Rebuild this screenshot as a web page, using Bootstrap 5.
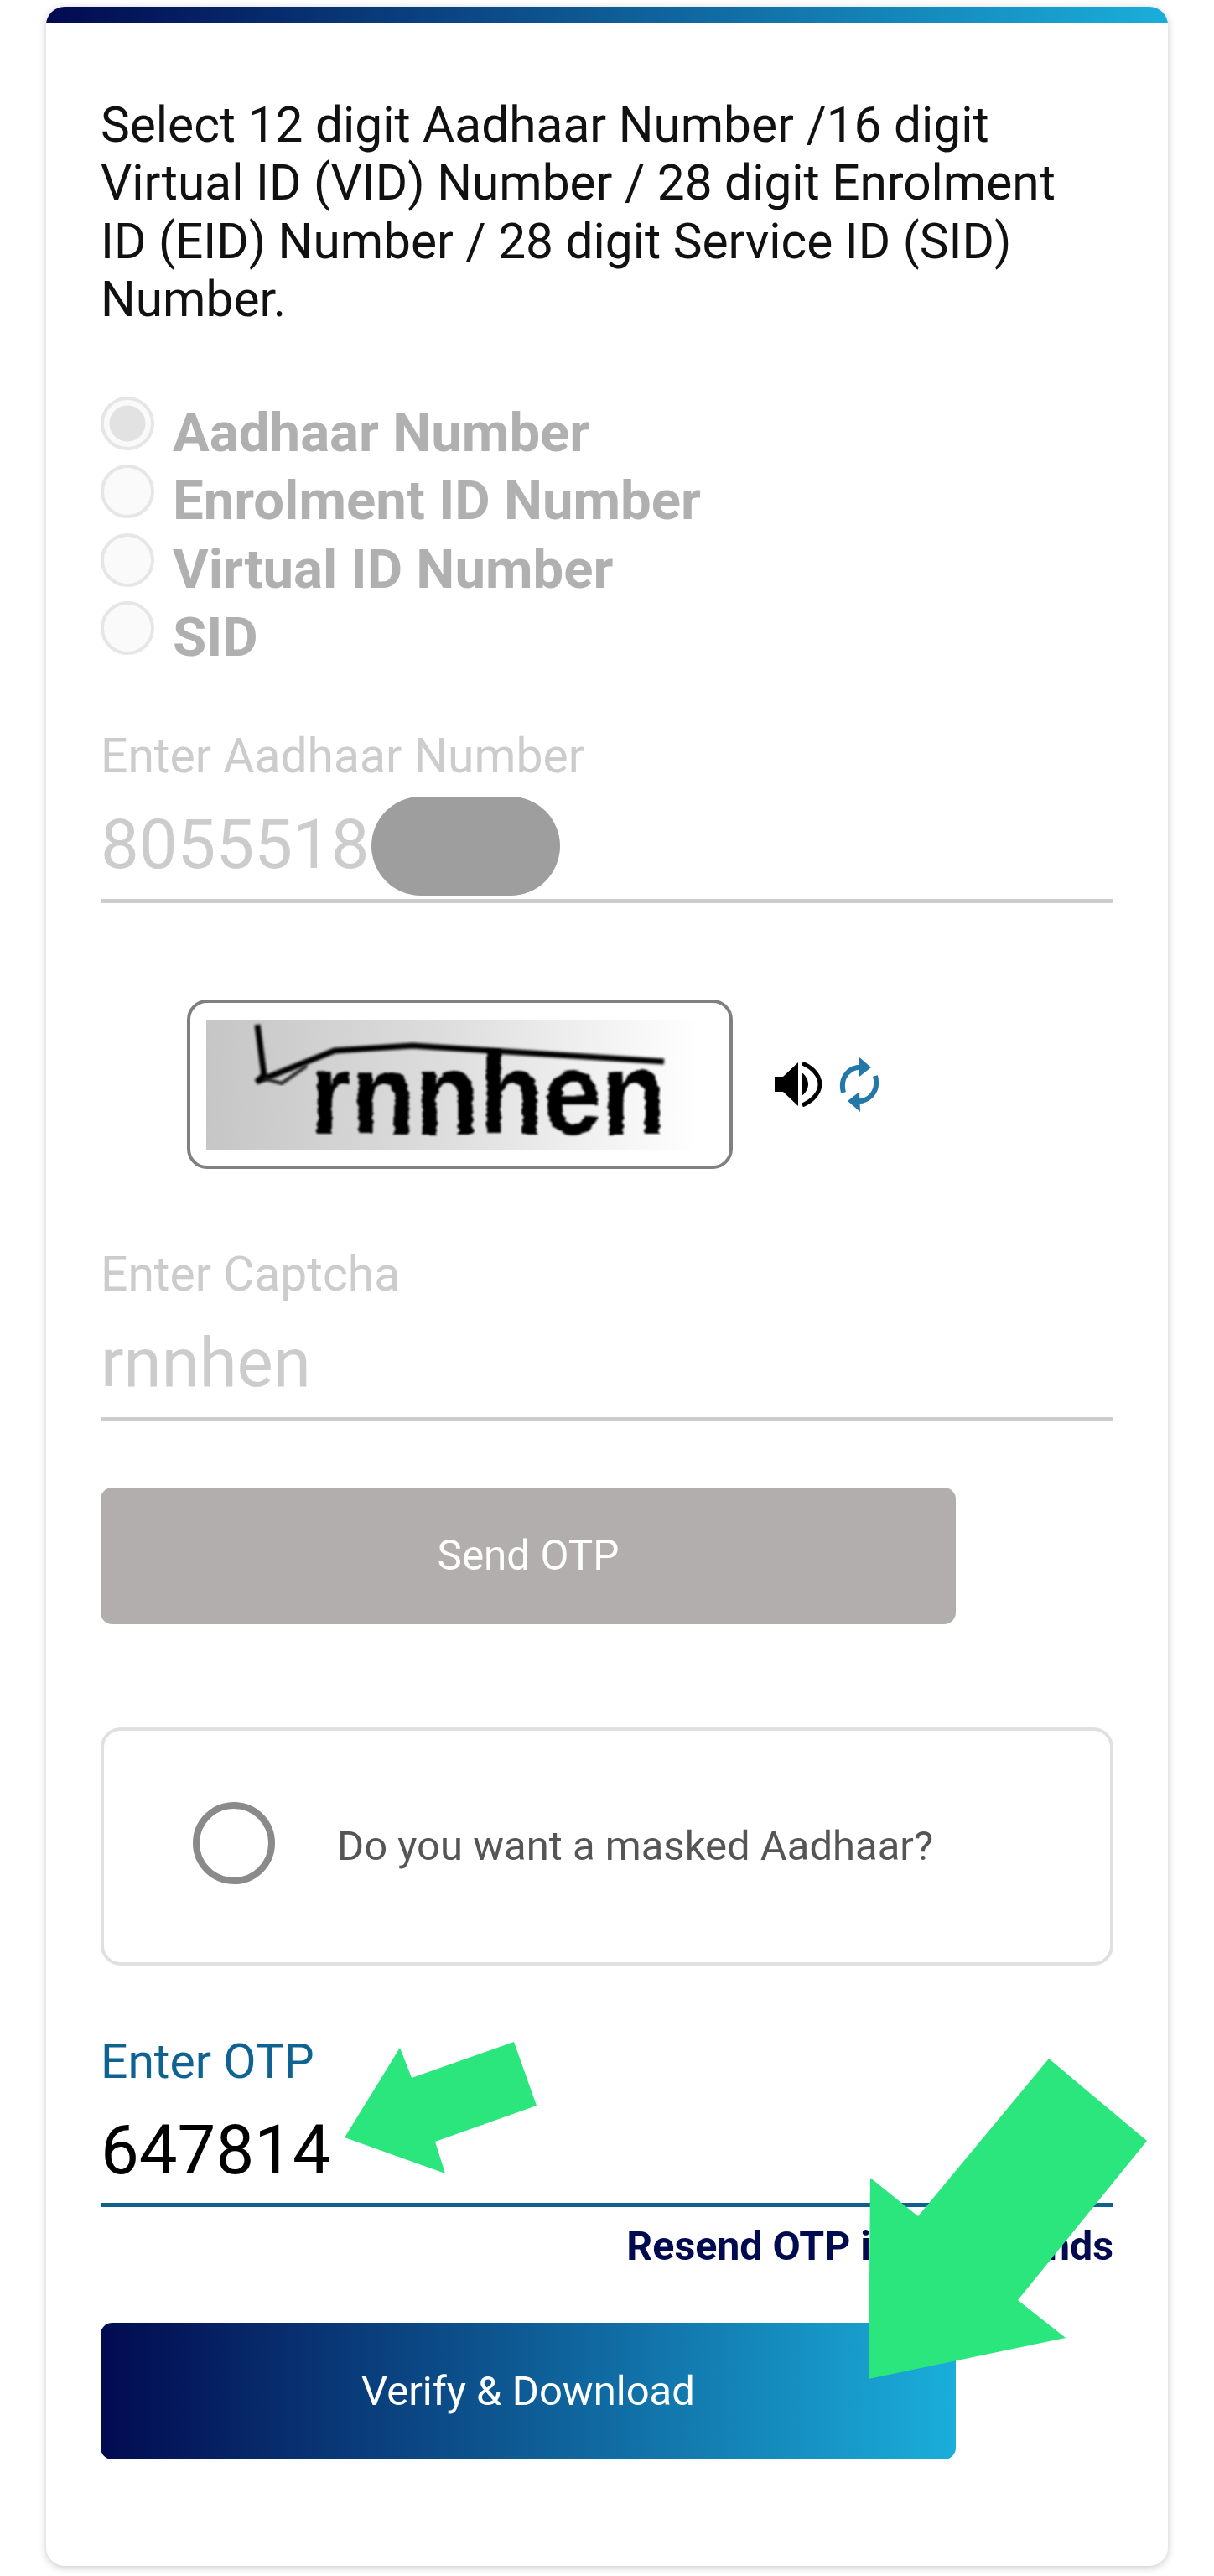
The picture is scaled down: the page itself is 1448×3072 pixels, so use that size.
<!DOCTYPE html>
<html lang="en">
<head>
<meta charset="utf-8">
<title>Download Aadhaar</title>
<link rel="stylesheet" href="https://cdn.jsdelivr.net/npm/bootstrap@5.3.0/dist/css/bootstrap.min.css">
<style>
html,body{margin:0;background:#fff;font-family:Roboto,"Liberation Sans",sans-serif}
.stage{position:relative;width:1448px;height:3072px;overflow:hidden;padding:8px 55px 0}
.sheet{width:1338px;height:3052px;border:0;border-radius:22px;box-shadow:0 2px 10px rgba(0,0,0,.22);background:#fff;overflow:hidden}
.topbar{height:20px;background:linear-gradient(90deg,#020a50,#1aaedb)}
.inner{padding:87px 65px 0}
.intro{font-size:58.6px;line-height:69.4px;color:#111;margin:0 0 80px;padding-right:50px}
.pick{height:81.6px;gap:22px}
.pick input{width:64px;height:64px;margin:0;flex:none;border:4px solid #cfcfcf;background:#f7f7f7;opacity:1}
.pick input:checked{background:radial-gradient(circle,#c6c6c6 0 21px,#f7f7f7 22px);border-color:#cfcfcf}
.pick span{font-size:65.3px;font-weight:700;line-height:64px;color:#b0b0b0;margin-top:11px;white-space:nowrap}
.fld-lab{font-size:57px;line-height:60px;color:#ccc}
.fld-val{height:140px;line-height:150px;font-size:81.5px;color:#ccc;border-bottom:5px solid #ccc;box-sizing:content-box}
.wrap-top{margin-top:73px}
.capt-row{margin:115px 0 0 103px;gap:50px}
.capt-box{width:651px;height:202px;border:4px solid #808080;border-radius:24px;padding:20px 19px}
.capt-img{display:block;width:605px;height:155px;overflow:visible;background:linear-gradient(90deg,#c6c6c6,#dcdcdc 45%,#fff 97%)}
.capt-gap{margin-top:96px}
.icon-set{gap:20px}
.fake-btn{display:block;width:1020px;height:163px;border:0;border-radius:14px;color:#fff;font-size:49.4px;line-height:163px;padding:0;text-align:center}
.fake-btn:disabled{background:#b3aeae;color:#fff;opacity:1;margin-top:79px}
.mask-box{margin-top:123px;height:284px;border:4px solid #e0e0e0;border-radius:24px;padding-left:106px;gap:74px}
.ring{width:98px;height:98px;border:8px solid #8a8a8a;border-radius:50%;flex:none;margin-bottom:8px}
.mask-txt{font-size:49px;color:#555}
.otp-lab{margin-top:85px;font-size:57px;line-height:60px;color:#0f6393}
.otp-val{height:138px;line-height:150px;font-size:81.5px;color:#000;border-bottom:5px solid #10608f;box-sizing:content-box}
.resend{margin-top:17px;line-height:60px;font-size:48.3px;font-weight:700;color:#020a50;text-align:right}
.go-btn{margin-top:61px;background:linear-gradient(90deg,#020a50,#1aaedb);color:#fff;font-size:49px}
.go-btn:hover{color:#fff}
.pill{position:absolute;left:443px;top:950px;width:225px;height:118px;background:#9e9e9e;border-radius:59px}
.overlay{position:absolute;left:0;top:0;width:1448px;height:3072px;pointer-events:none}
</style>
</head>
<body>
<div class="stage">
  <div class="card sheet">
    <div class="topbar"></div>
    <div class="inner">
      <p class="intro">Select 12 digit Aadhaar Number /16 digit Virtual ID (VID) Number / 28 digit Enrolment ID (EID) Number / 28 digit Service ID (SID) Number.</p>

      <div class="d-flex align-items-start pick"><input class="form-check-input" type="radio" name="k" checked disabled><span>Aadhaar Number</span></div>
      <div class="d-flex align-items-start pick"><input class="form-check-input" type="radio" name="k" disabled><span>Enrolment ID Number</span></div>
      <div class="d-flex align-items-start pick"><input class="form-check-input" type="radio" name="k" disabled><span>Virtual ID Number</span></div>
      <div class="d-flex align-items-start pick"><input class="form-check-input" type="radio" name="k" disabled><span>SID</span></div>

      <div class="fld-lab wrap-top">Enter Aadhaar Number</div>
      <div class="fld-val">8055518</div>

      <div class="d-flex align-items-center capt-row">
        <div class="capt-box">
          <svg class="capt-img" viewBox="0 0 605 155" role="img" aria-label="captcha">
            <defs>
              <filter id="soft"><feGaussianBlur stdDeviation="1.4"/></filter>
              <filter id="wob" x="-10%" y="-10%" width="120%" height="120%">
                <feTurbulence type="fractalNoise" baseFrequency="0.02 0.2" numOctaves="1" seed="4"/>
                <feDisplacementMap in="SourceGraphic" scale="7" xChannelSelector="R" yChannelSelector="G"/>
                <feGaussianBlur stdDeviation="1.2"/>
              </filter>
            </defs>
            <text x="124" y="136" textLength="424" lengthAdjust="spacingAndGlyphs" font-family="'Liberation Sans',sans-serif" font-weight="700" font-size="140" fill="#000" filter="url(#wob)">rnnhen</text>
            <polyline points="61,6 69,66 60,74 153,37 246,31 546,50" fill="none" stroke="#000" stroke-width="7" filter="url(#soft)"/>
            <polyline points="69,70 90,76 120,55" fill="none" stroke="#222" stroke-width="4" filter="url(#soft)"/>
          </svg>
        </div>
        <div class="d-flex align-items-center icon-set">
          <svg width="56" height="54" viewBox="0 0 56 54" aria-hidden="true"><path d="M0 18h10L28 1v52L10 36H0z" fill="#000"/><path d="M32 13c6 4 8 10 8 14s-2 10-8 14z" fill="#000"/><path d="M33 2c14 6 21 16 21 25s-7 19-21 25" fill="none" stroke="#000" stroke-width="5"/></svg>
          <svg width="50" height="66" viewBox="0 0 50 66" aria-hidden="true" fill="none" stroke="#2478a8" stroke-width="6"><path d="M30 13C14 11 1 24 6 43"/><path d="M20 53C36 55 49 42 44 23"/><path d="M24 0l15 13-14 11z" fill="#2478a8" stroke="none"/><path d="M26 66L11 53l14-11z" fill="#2478a8" stroke="none"/></svg>
        </div>
      </div>

      <div class="fld-lab capt-gap">Enter Captcha</div>
      <div class="fld-val">rnnhen</div>

      <button type="button" class="btn fake-btn" disabled>Send OTP</button>

      <div class="d-flex align-items-center mask-box">
        <div class="ring"></div>
        <div class="mask-txt">Do you want a masked Aadhaar?</div>
      </div>

      <div class="otp-lab">Enter OTP</div>
      <div class="otp-val">647814</div>
      <div class="resend">Resend OTP in 44 seconds</div>

      <button type="button" class="btn fake-btn go-btn">Verify &amp; Download</button>
    </div>
  </div>
  <div class="pill"></div>
  <svg class="overlay" viewBox="0 0 1448 3072" aria-hidden="true">
    <polygon fill="#2be67d" points="477,2442 491,2478 613,2435 640,2511 519,2554 531,2592 411,2549"/>
    <polygon fill="#2be67d" points="1251,2455 1368,2553 1214,2743 1271,2788 1036,2837 1038,2597 1095,2643"/>
  </svg>
</div>
<script src="https://cdn.jsdelivr.net/npm/bootstrap@5.3.0/dist/js/bootstrap.bundle.min.js"></script>
</body>
</html>
